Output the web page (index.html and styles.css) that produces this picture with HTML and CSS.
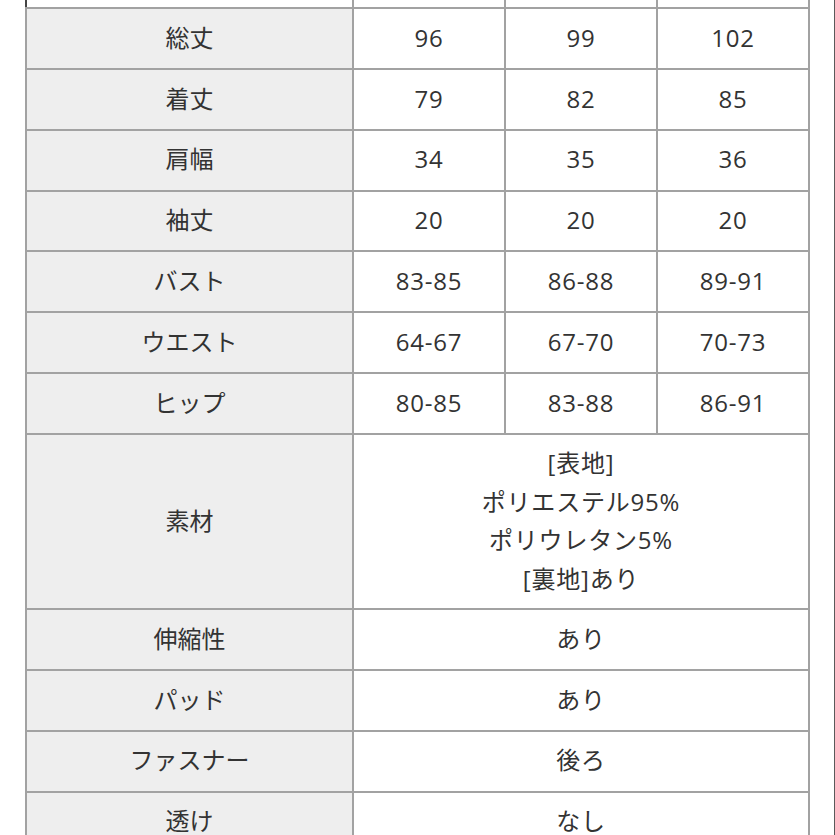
FILE: index.html
```html
<!DOCTYPE html>
<html lang="ja">
<head>
<meta charset="utf-8">
<link rel="stylesheet" href="styles.css">
</head>
<body>
<div class="page">
  <table class="spec">
    <colgroup>
      <col class="c-label"><col class="c-size"><col class="c-size"><col class="c-size">
    </colgroup>
    <tr class="cut"><td class="head"></td><td></td><td></td><td></td></tr>
    <tr><th>総丈</th><td>96</td><td>99</td><td>102</td></tr>
    <tr><th>着丈</th><td>79</td><td>82</td><td>85</td></tr>
    <tr><th>肩幅</th><td>34</td><td>35</td><td>36</td></tr>
    <tr><th>袖丈</th><td>20</td><td>20</td><td>20</td></tr>
    <tr><th>バスト</th><td>83-85</td><td>86-88</td><td>89-91</td></tr>
    <tr><th>ウエスト</th><td>64-67</td><td>67-70</td><td>70-73</td></tr>
    <tr><th>ヒップ</th><td>80-85</td><td>83-88</td><td>86-91</td></tr>
    <tr class="tall"><th>素材</th><td colspan="3">[表地]<br>ポリエステル95%<br>ポリウレタン5%<br>[裏地]あり</td></tr>
    <tr><th>伸縮性</th><td colspan="3">あり</td></tr>
    <tr><th>パッド</th><td colspan="3">あり</td></tr>
    <tr><th>ファスナー</th><td colspan="3">後ろ</td></tr>
    <tr><th>透け</th><td colspan="3">なし</td></tr>
  </table>
</div>
</body>
</html>
```

FILE: styles.css
```css
html, body {
  margin: 0;
  padding: 0;
  background: #ffffff;
}

.page {
  width: 834px;
  height: 835px;
  overflow: hidden;
  border-right: 1px solid #5a5a5a;
  background: #ffffff;
}

.spec {
  margin-left: 25px;
  width: 784px;
  border-collapse: collapse;
  table-layout: fixed;
  font-family: "Open Sans", "Noto Sans CJK JP", sans-serif;
  font-size: 24px;
  color: #333333;
}

.c-label { width: 327px; }
.c-size { width: 152px; }

.spec th,
.spec td {
  border: 2px solid #a2a2a2;
  text-align: center;
  vertical-align: middle;
  padding: 0 0 1px 0;
  height: 57.86px;
  line-height: 38.5px;
  font-weight: normal;
}

.spec td {
  letter-spacing: 0.8px;
}

.spec th {
  background: #eeeeee;
}

.spec .cut td {
  height: 7px;
  padding: 0;
  border-top: none;
}

.spec .cut td.head {
  border-left-color: #444444;
}

.spec .tall th,
.spec .tall td {
  height: 172px;
}
```
